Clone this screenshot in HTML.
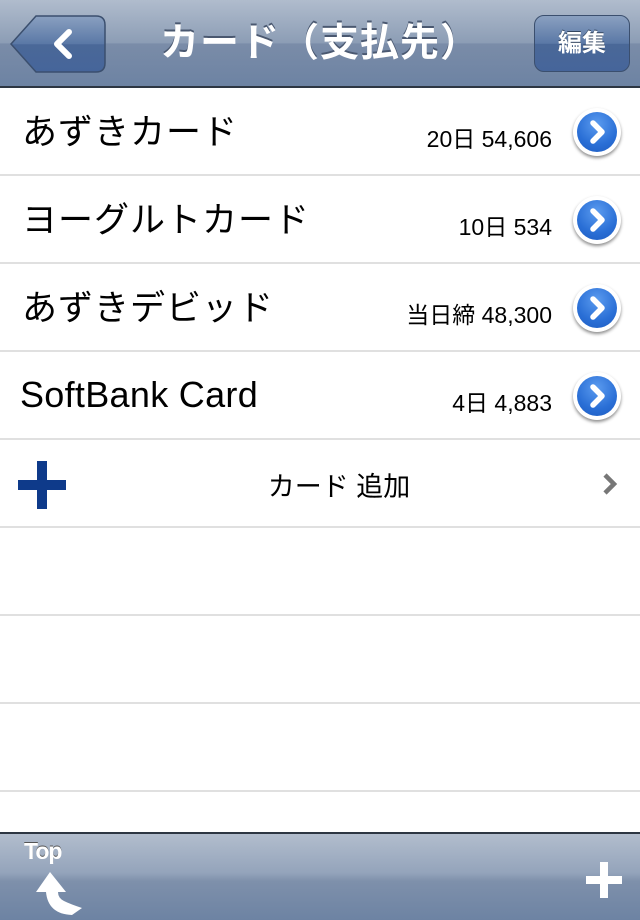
<!DOCTYPE html>
<html><head><meta charset="utf-8"><style>
*{margin:0;padding:0;box-sizing:border-box}
body{width:640px;height:920px;overflow:hidden;background:#fff;font-family:"Liberation Sans","Noto Sans CJK JP",sans-serif;position:relative}
.nav{position:absolute;left:0;top:0;width:640px;height:88px;background:linear-gradient(#b0bccd 0%,#8c9db5 50%,#7a8ca8 51%,#6d83a3 100%);border-bottom:2px solid #2d3642}
.title{position:absolute;left:0;width:640px;top:12px;text-align:center;color:#fff;font-size:39px;font-weight:bold;text-shadow:0 -2px 0 #4a5870;letter-spacing:1px}
.back{position:absolute;left:10px;top:15px;width:96px;height:58px}
.edit{position:absolute;left:534px;top:15px;width:96px;height:57px;border-radius:10px;border:1px solid #3b4f6e;background:linear-gradient(#8aa0c0,#5a78a6 50%,#4a6898 51%,#46659a);color:#fff;font-size:24px;font-weight:bold;text-align:center;line-height:55px;text-shadow:0 -1px 0 #33455f}
.row{position:absolute;left:0;width:640px;height:88px;border-bottom:2px solid #e0e0e0}
.name{position:absolute;left:22px;top:16px;font-size:35px;color:#000;letter-spacing:1px}
.val{position:absolute;right:88px;top:32px;font-size:23px;color:#000}
.disc{position:absolute;left:573px;top:20px;width:48px;height:48px;border-radius:50%;background:#fff;box-shadow:0 2px 3px rgba(0,0,0,.45)}
.disc i{position:absolute;left:4px;top:4px;width:40px;height:40px;border-radius:50%;background:radial-gradient(circle at 50% 30%,#5b9bef,#2a6fd6 60%,#1d5bc0)}
.tb{position:absolute;left:0;top:832px;width:640px;height:88px;border-top:2px solid #2d3642;background:linear-gradient(#b2bdcd 0%,#94a4bb 45%,#7e90ab 55%,#6d83a3 100%)}
</style></head><body>
<div class="nav">
<svg class="back" viewBox="0 0 96 58"><defs><linearGradient id="g" x1="0" y1="0" x2="0" y2="1"><stop offset="0" stop-color="#8aa0c0"/><stop offset=".5" stop-color="#5a78a6"/><stop offset=".51" stop-color="#4a6898"/><stop offset="1" stop-color="#46659a"/></linearGradient></defs><path d="M1 29 L26 1 H86 Q95 1 95 10 V48 Q95 57 86 57 H26 Z" fill="url(#g)" stroke="#3b4f6e" stroke-width="1.5"/><path d="M59 17 L47 29 L59 41" fill="none" stroke="#fff" stroke-width="6" stroke-linecap="round" stroke-linejoin="round"/></svg>
<div class="title">カード（支払先）</div>
<div class="edit">編集</div>
</div>
<div class="row" style="top:88px"><div class="name">あずきカード</div><div class="val">20日 54,606</div><div class="disc"><i></i><svg style="position:absolute;left:4px;top:4px" width="40" height="40"><path d="M16 11 L25 20 L16 29" fill="none" stroke="#fff" stroke-width="5.5" stroke-linecap="round" stroke-linejoin="round"/></svg></div></div>
<div class="row" style="top:176px"><div class="name">ヨーグルトカード</div><div class="val">10日 534</div><div class="disc"><i></i><svg style="position:absolute;left:4px;top:4px" width="40" height="40"><path d="M16 11 L25 20 L16 29" fill="none" stroke="#fff" stroke-width="5.5" stroke-linecap="round" stroke-linejoin="round"/></svg></div></div>
<div class="row" style="top:264px"><div class="name">あずきデビッド</div><div class="val">当日締 48,300</div><div class="disc"><i></i><svg style="position:absolute;left:4px;top:4px" width="40" height="40"><path d="M16 11 L25 20 L16 29" fill="none" stroke="#fff" stroke-width="5.5" stroke-linecap="round" stroke-linejoin="round"/></svg></div></div>
<div class="row" style="top:352px"><div class="name" style="left:20px;top:22px;font-size:36px;letter-spacing:0.3px">SoftBank Card</div><div class="val">4日 4,883</div><div class="disc"><i></i><svg style="position:absolute;left:4px;top:4px" width="40" height="40"><path d="M16 11 L25 20 L16 29" fill="none" stroke="#fff" stroke-width="5.5" stroke-linecap="round" stroke-linejoin="round"/></svg></div></div>
<div class="row" style="top:440px"><svg style="position:absolute;left:18px;top:21px" width="48" height="48"><rect x="19" y="0" width="10" height="48" fill="#0e3a8a"/><rect x="0" y="19" width="48" height="10" fill="#0e3a8a"/></svg><div style="position:absolute;left:0;width:678px;text-align:center;top:25px;font-size:27px">カード 追加</div><svg style="position:absolute;left:600px;top:32px" width="20" height="24"><path d="M5 3 L14 12 L5 21" fill="none" stroke="#777" stroke-width="4.5"/></svg></div>
<div class="row" style="top:528px"></div>
<div class="row" style="top:616px"></div>
<div class="row" style="top:704px"></div>
<div class="tb">
<div style="position:absolute;left:24px;top:4px;color:#fff;font-size:23px;font-weight:bold;letter-spacing:-1px;text-shadow:0 -1px 0 #555">Top</div>
<svg style="position:absolute;left:30px;top:36px" width="56" height="50"><path d="M20 2 L6 22 L16 22 Q18 44 42 45 L52 38 Q40 34 34 31 Q28 28 28 22 L36 22 Z" fill="#fff"/></svg>
<svg style="position:absolute;left:586px;top:26px" width="36" height="40"><rect x="14" y="2" width="8" height="36" fill="#fff"/><rect x="0" y="16" width="36" height="8" fill="#fff"/></svg>
</div>
</body></html>
